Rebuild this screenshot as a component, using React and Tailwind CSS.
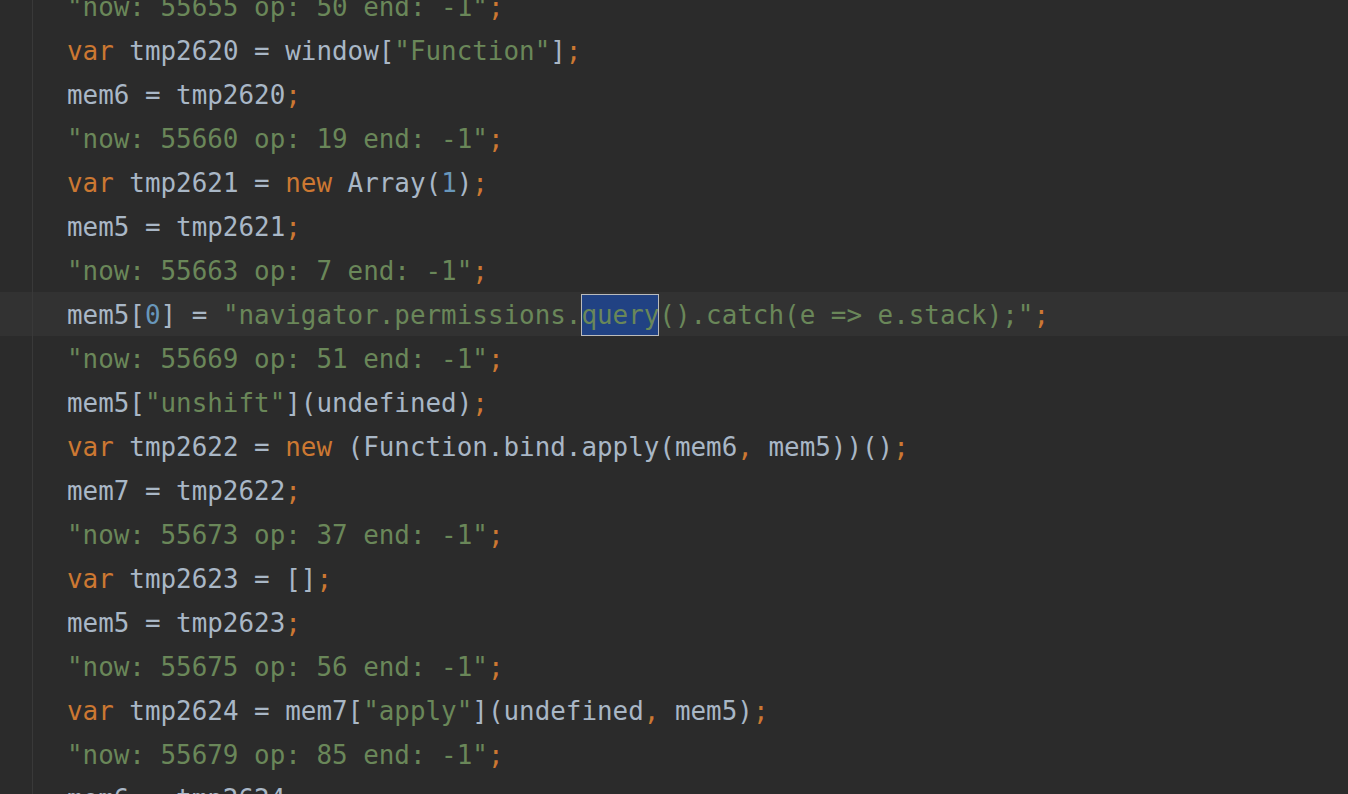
import React from "react";

const K = "text-[#CC7832]";
const S = "text-[#6A8759]";
const D = "text-[#A9B7C6]";
const N = "text-[#6897BB]";
const Q = "query";

const lines = [
  [[S, '"now: 55655 op: 50 end: -1"'], [K, ";"]],
  [[K, "var"], [D, " tmp2620 = window["], [S, '"Function"'], [D, "]"], [K, ";"]],
  [[D, "mem6 = tmp2620"], [K, ";"]],
  [[S, '"now: 55660 op: 19 end: -1"'], [K, ";"]],
  [[K, "var"], [D, " tmp2621 = "], [K, "new"], [D, " Array("], [N, "1"], [D, ")"], [K, ";"]],
  [[D, "mem5 = tmp2621"], [K, ";"]],
  [[S, '"now: 55663 op: 7 end: -1"'], [K, ";"]],
  [[D, "mem5["], [N, "0"], [D, "] = "], [S, '"navigator.permissions.'], [Q, "query"], [S, '().catch(e => e.stack);"'], [K, ";"]],
  [[S, '"now: 55669 op: 51 end: -1"'], [K, ";"]],
  [[D, "mem5["], [S, '"unshift"'], [D, "](undefined)"], [K, ";"]],
  [[K, "var"], [D, " tmp2622 = "], [K, "new"], [D, " (Function.bind.apply(mem6"], [K, ","], [D, " mem5))()"], [K, ";"]],
  [[D, "mem7 = tmp2622"], [K, ";"]],
  [[S, '"now: 55673 op: 37 end: -1"'], [K, ";"]],
  [[K, "var"], [D, " tmp2623 = []"], [K, ";"]],
  [[D, "mem5 = tmp2623"], [K, ";"]],
  [[S, '"now: 55675 op: 56 end: -1"'], [K, ";"]],
  [[K, "var"], [D, " tmp2624 = mem7["], [S, '"apply"'], [D, "](undefined"], [K, ","], [D, " mem5)"], [K, ";"]],
  [[S, '"now: 55679 op: 85 end: -1"'], [K, ";"]],
  [[D, "mem6 = tmp2624"], [K, ";"]],
];

export default function App() {
  return (
    <div className="w-[1348px] h-[794px] overflow-hidden bg-[#2b2b2b]">
      <div
        className="-mt-[16px] flex flex-col text-[25.9px] leading-[44px] whitespace-pre"
        style={{ fontFamily: '"DejaVu Sans Mono", "Liberation Mono", monospace' }}
      >
        {lines.map((toks, i) => (
          <div key={i} className={`flex h-[44px] ${i === 7 ? "bg-[#323232]" : ""}`}>
            <div className="w-[33px] shrink-0 border-r border-[#393939]" />
            <div className="pl-[34px] pt-px">
              {toks.map(([c, t], j) =>
                c === Q ? (
                  <span
                    key={j}
                    className="relative inline-block leading-[42px] bg-[#214283] outline outline-1 -outline-offset-1 outline-[#bbbbbb] text-[#6A8759]"
                  >
                    {t}
                  </span>
                ) : (
                  <span key={j} className={c}>
                    {t}
                  </span>
                )
              )}
            </div>
          </div>
        ))}
      </div>
    </div>
  );
}
